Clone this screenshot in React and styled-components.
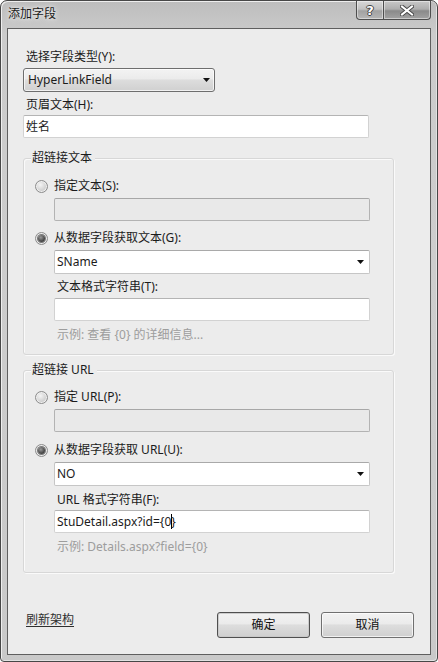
import React from "react";
import styled, { createGlobalStyle } from "styled-components";

const Global = createGlobalStyle`
  html, body { margin: 0; padding: 0; background: #ffffff; }
  * { box-sizing: border-box; }
  body {
    font-family: "Segoe UI", "Noto Sans", "Noto Sans CJK SC", sans-serif;
    font-size: 12px;
    color: #1b1b1b;
  }
`;

const Window = styled.div`
  width: 438px;
  height: 662px;
  border: 1px solid #474747;
  border-radius: 7px 7px 4px 4px;
  background: linear-gradient(180deg, #bdbdbd 0%, #cbcbcb 5%, #cdcdcd 40%, #c9c9c9 100%);
  box-shadow: inset 1px 1px 0 #eeeeee, inset -1px -1px 0 #e2e2e2;
  padding: 0 6px 6px;
  display: flex;
  flex-direction: column;
  overflow: hidden;
`;

const TitleBar = styled.div`
  height: 27px;
  display: flex;
  align-items: flex-start;
  justify-content: space-between;
`;

const Title = styled.div`
  padding: 5px 0 0 1px;
  line-height: 16px;
  font-size: 12px;
  color: #1a1a1a;
  text-shadow: 0 0 6px #f4f4f4, 0 0 3px #eeeeee;
`;

const Caption = styled.div`
  display: flex;
  height: 19px;
`;

const CaptionButton = styled.div`
  width: ${(p) => p.$w}px;
  height: 19px;
  border: 1px solid #4e4e4e;
  border-top: none;
  border-radius: ${(p) => (p.$first ? "0 0 0 4px" : "0 0 4px 0")};
  margin-left: ${(p) => (p.$first ? 0 : -1)}px;
  background: ${(p) =>
    p.$close
      ? "linear-gradient(180deg, #c8c8c8 0%, #aeaeae 45%, #8a8a8a 55%, #a2a2a2 100%)"
      : "linear-gradient(180deg, #d8d8d8 0%, #c2c2c2 45%, #a2a2a2 55%, #b6b6b6 100%)"};
  box-shadow: inset 0 0 0 1px rgba(255, 255, 255, 0.45);
  display: flex;
  align-items: center;
  justify-content: center;
`;

const HelpGlyph = styled.span`
  font-family: "DejaVu Sans", sans-serif;
  font-weight: bold;
  font-size: 13px;
  line-height: 13px;
  color: #ffffff;
  text-shadow: -1px 0 #444, 1px 0 #444, 0 -1px #444, 0 1px #444;
`;

const Client = styled.div`
  flex: 1;
  border: 1px solid #5f5f5f;
  background: #ececec;
  padding: 20px 0 0 15px;
  display: flex;
  flex-direction: column;
  align-items: flex-start;
`;

const Label = styled.div`
  line-height: 16px;
  height: 16px;
  margin-top: ${(p) => p.$mt || 0}px;
  margin-left: ${(p) => p.$ml || 0}px;
  color: ${(p) => (p.$hint ? "#9d9d9d" : "#1b1b1b")};
  white-space: nowrap;
`;

const ComboButton = styled.div`
  width: 192px;
  height: 24px;
  margin-top: ${(p) => p.$mt || 0}px;
  border: 1px solid #6e6e6e;
  border-radius: 3px;
  background: linear-gradient(180deg, #f3f3f3 0%, #ebebeb 45%, #dddddd 50%, #d0d0d0 100%);
  box-shadow: inset 0 0 0 1px rgba(255, 255, 255, 0.7);
  display: flex;
  align-items: center;
  justify-content: space-between;
  padding: 0 4px 0 4px;
  line-height: 16px;
`;

const Combo = styled.div`
  width: ${(p) => p.$w}px;
  height: 24px;
  margin-top: ${(p) => p.$mt || 0}px;
  margin-left: ${(p) => p.$ml || 0}px;
  border: 1px solid #c6c6c6;
  border-top-color: #a9a9a9;
  border-radius: 2px;
  background: #ffffff;
  display: flex;
  align-items: center;
  justify-content: space-between;
  padding: 0 5px 0 2px;
  line-height: 16px;
`;

const TextBox = styled.div`
  width: ${(p) => p.$w}px;
  height: 23px;
  margin-top: ${(p) => p.$mt || 0}px;
  margin-left: ${(p) => p.$ml || 0}px;
  border: 1px solid ${(p) => (p.$disabled ? "#b3b3b3" : "#d2d2d2")};
  border-top-color: ${(p) => (p.$disabled ? "#a7a7a7" : "#b4b4b4")};
  border-radius: 2px;
  background: ${(p) => (p.$disabled ? "#e9e9e9" : "#ffffff")};
  display: flex;
  align-items: center;
  padding: 0 2px;
  line-height: 16px;
  white-space: nowrap;
`;

const Caret = styled.span`
  display: inline-block;
  width: 1px;
  height: 15px;
  background: #000;
  vertical-align: -3px;
  margin-right: -1px;
`;

const Group = styled.div`
  position: relative;
  width: 371px;
  margin-top: ${(p) => p.$mt}px;
  border: 1px solid #d7d7d7;
  border-radius: 3px;
  box-shadow: 1px 1px 0 #fafafa inset, 1px 1px 0 #fafafa;
  padding: ${(p) => p.$pt}px 0 ${(p) => p.$pb}px 11px;
  display: flex;
  flex-direction: column;
  align-items: flex-start;
`;

const Legend = styled.div`
  position: absolute;
  top: -9px;
  left: 7px;
  padding: 0 3px 0 1px;
  background: #ececec;
  line-height: 16px;
`;

const RadioRow = styled.div`
  display: flex;
  align-items: center;
  gap: 6px;
  height: 16px;
  line-height: 16px;
  margin-top: ${(p) => p.$mt || 0}px;
`;

const RadioCircle = styled.span`
  width: 13px;
  height: 13px;
  border-radius: 50%;
  border: 1px solid #8c8c8c;
  background: radial-gradient(circle at 40% 35%, #f4f4f4 0%, #d6d6d6 50%, #bdbdbd 100%);
  box-shadow: inset 0 0 0 1px #efefef;
  display: flex;
  align-items: center;
  justify-content: center;
  flex: none;
`;

const RadioDot = styled.span`
  width: 7px;
  height: 7px;
  border-radius: 50%;
  background: radial-gradient(circle at 40% 35%, #9a9a9a 0%, #4a4a4a 60%, #2b2b2b 100%);
  box-shadow: 0 0 0 1px #7a7a7a;
`;

const Footer = styled.div`
  align-self: stretch;
  margin-top: 39px;
  padding-right: 16px;
  display: flex;
  justify-content: space-between;
  align-items: flex-start;
`;

const Link = styled.span`
  margin-left: 3px;
  line-height: 16px;
  color: #2f2f2f;
  text-decoration: underline;
  text-underline-offset: 2px;
`;

const Buttons = styled.div`
  display: flex;
  gap: 11px;
`;

const Button = styled.div`
  width: 93px;
  height: 26px;
  border: 1px solid ${(p) => (p.$default ? "#4f4f4f" : "#707070")};
  border-radius: 3px;
  background: linear-gradient(180deg, #f2f2f2 0%, #ebebeb 45%, #dddddd 50%, #cfcfcf 100%);
  box-shadow: inset 0 0 0 1px ${(p) => (p.$default ? "rgba(200,200,200,0.9)" : "rgba(255,255,255,0.7)")};
  display: flex;
  align-items: center;
  justify-content: center;
  line-height: 16px;
  color: #111;
`;

const Arrow = () => (
  <svg width="7" height="4" viewBox="0 0 7 4">
    <polygon points="0,0 7,0 3.5,4" fill="#111" />
  </svg>
);

const CloseIcon = () => (
  <svg width="14" height="11" viewBox="0 0 14 11">
    <path d="M2 1.5 L12 9.5 M12 1.5 L2 9.5" stroke="#4a4a4a" strokeWidth="4" strokeLinecap="square" />
    <path d="M2 1.5 L12 9.5 M12 1.5 L2 9.5" stroke="#ffffff" strokeWidth="2" strokeLinecap="square" />
  </svg>
);

const Radio = ({ checked, children, mt }) => (
  <RadioRow $mt={mt}>
    <RadioCircle>{checked && <RadioDot />}</RadioCircle>
    <span>{children}</span>
  </RadioRow>
);

export default function App() {
  return (
    <>
      <Global />
      <Window>
        <TitleBar>
          <Title>添加字段</Title>
          <Caption>
            <CaptionButton $w={28} $first>
              <HelpGlyph>?</HelpGlyph>
            </CaptionButton>
            <CaptionButton $w={48} $close>
              <CloseIcon />
            </CaptionButton>
          </Caption>
        </TitleBar>
        <Client>
          <Label $ml={3}>选择字段类型(Y):</Label>
          <ComboButton $mt={3}>
            <span>HyperLinkField</span>
            <Arrow />
          </ComboButton>
          <Label $mt={5} $ml={3}>页眉文本(H):</Label>
          <TextBox $w={346} $mt={2}>姓名</TextBox>

          <Group $mt={20} $pt={19} $pb={11}>
            <Legend>超链接文本</Legend>
            <Radio>指定文本(S):</Radio>
            <TextBox $w={316} $mt={4} $ml={19} $disabled />
            <Radio checked mt={9}>从数据字段获取文本(G):</Radio>
            <Combo $w={316} $mt={4} $ml={19}>
              <span>SName</span>
              <Arrow />
            </Combo>
            <Label $mt={5} $ml={22}>文本格式字符串(T):</Label>
            <TextBox $w={316} $mt={3} $ml={19} />
            <Label $mt={6} $ml={22} $hint>示例: 查看 {"{0}"} 的详细信息...</Label>
          </Group>

          <Group $mt={15} $pt={18} $pb={17}>
            <Legend>超链接 URL</Legend>
            <Radio>指定 URL(P):</Radio>
            <TextBox $w={316} $mt={4} $ml={19} $disabled />
            <Radio checked mt={10}>从数据字段获取 URL(U):</Radio>
            <Combo $w={316} $mt={4} $ml={19}>
              <span>NO</span>
              <Arrow />
            </Combo>
            <Label $mt={6} $ml={22}>URL 格式字符串(F):</Label>
            <TextBox $w={316} $mt={2} $ml={19}>
              <span>
                StuDetail.aspx?id={"{0"}
                <Caret />
                {"}"}
              </span>
            </TextBox>
            <Label $mt={6} $ml={22} $hint>示例: Details.aspx?field={"{0}"}</Label>
          </Group>

          <Footer>
            <Link>刷新架构</Link>
            <Buttons>
              <Button $default>确定</Button>
              <Button>取消</Button>
            </Buttons>
          </Footer>
        </Client>
      </Window>
    </>
  );
}
